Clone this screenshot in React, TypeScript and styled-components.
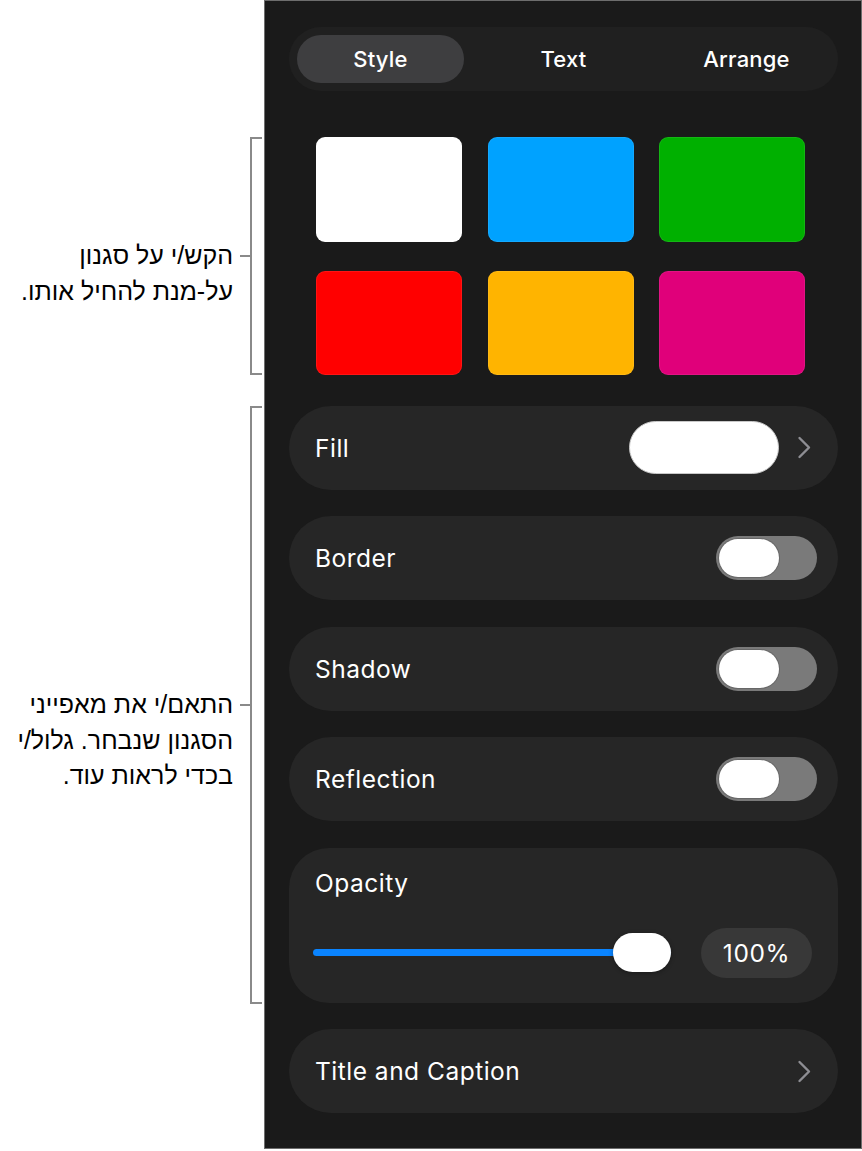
import React from "react";
import styled, { createGlobalStyle } from "styled-components";

const GlobalStyle = createGlobalStyle`
  html, body { margin: 0; padding: 0; background: #ffffff; }
  body { font-family: Inter, Roboto, "Liberation Sans", sans-serif; -webkit-font-smoothing: antialiased; }
  * { box-sizing: border-box; }
`;

const Page = styled.div`
  display: flex;
  align-items: flex-start;
  width: 862px;
  height: 1151px;
  background: #ffffff;
`;

const NotesColumn = styled.div`
  width: 264px;
  flex: none;
  padding-top: 137px;
  padding-right: 2px;
  display: flex;
  flex-direction: column;
  gap: 31px;
`;

const Annotation = styled.div<{ $h: number }>`
  height: ${(p) => p.$h}px;
  display: flex;
  align-items: center;
  justify-content: flex-end;
`;

const NoteAnchor = styled.div`
  height: 35.5px;
  margin-right: 7px;
  overflow: visible;
`;

const NoteText = styled.p`
  margin: 0;
  direction: rtl;
  text-align: right;
  white-space: nowrap;
  font-family: "Liberation Sans", "DejaVu Sans", Arial, sans-serif;
  font-size: 25px;
  line-height: 35.5px;
  color: #000000;
`;

const Tick = styled.div`
  width: 10px;
  height: 2px;
  background: #8a8a8a;
  flex: none;
`;

const Bracket = styled.div`
  align-self: stretch;
  width: 12px;
  flex: none;
  border: 2px solid #8a8a8a;
  border-right: none;
`;

const Panel = styled.div`
  width: 598px;
  height: 1149px;
  flex: none;
  border: 1px solid #6d6d6d;
  background: #1a1a1a;
  padding: 26px 23px 0 24px;
  display: flex;
  flex-direction: column;
  color: #ffffff;
`;

const TabBar = styled.div`
  height: 64px;
  border-radius: 32px;
  background: #202020;
  display: grid;
  grid-template-columns: repeat(3, 1fr);
  padding: 8px 0;
`;

const Tab = styled.div<{ $active?: boolean }>`
  margin: 0 8px;
  border-radius: 24px;
  background: ${(p) => (p.$active ? "#3e3e40" : "transparent")};
  display: flex;
  align-items: center;
  justify-content: center;
  font-size: 22px;
  font-weight: 500;
  letter-spacing: 0.2px;
  color: #ffffff;
`;

const SwatchGrid = styled.div`
  margin-top: 46px;
  padding-left: 27px;
  display: grid;
  grid-template-columns: repeat(3, 146px);
  grid-auto-rows: 104.5px;
  column-gap: 25.5px;
  row-gap: 29px;
`;

const Swatch = styled.div<{ $color: string }>`
  border-radius: 9px;
  background: ${(p) => p.$color};
  box-shadow: inset 0 0 0 1px rgba(255, 255, 255, 0.08);
`;

const RowList = styled.div`
  margin-top: 30.5px;
  display: flex;
  flex-direction: column;
  gap: 26.5px;
`;

const Row = styled.div<{ $padRight: number }>`
  height: 84px;
  border-radius: 42px;
  background: #262626;
  display: flex;
  align-items: center;
  justify-content: space-between;
  padding: 0 ${(p) => p.$padRight}px 0 26px;
`;

const Label = styled.span`
  font-size: 24.5px;
  color: #ffffff;
  letter-spacing: 0.5px;
`;

const RowEnd = styled.div`
  display: flex;
  align-items: center;
  gap: 18px;
`;

const FillWell = styled.div`
  width: 150px;
  height: 53px;
  border-radius: 27px;
  background: #ffffff;
  border: 1px solid #c8c8c8;
`;

const ToggleTrack = styled.div<{ $on?: boolean }>`
  width: 101px;
  height: 44px;
  border-radius: 22px;
  background: ${(p) => (p.$on ? "#34c759" : "#7a7a7a")};
  padding: 3px;
  display: flex;
  align-items: center;
  justify-content: ${(p) => (p.$on ? "flex-end" : "flex-start")};
`;

const ToggleKnob = styled.div`
  width: 60px;
  height: 38px;
  border-radius: 19px;
  background: #ffffff;
  box-shadow: 0 0 0 1px rgba(0, 0, 0, 0.15);
`;

const OpacityCard = styled.div`
  height: 155px;
  border-radius: 40px;
  background: #262626;
  padding: 20px 26px 25px 26px;
  display: flex;
  flex-direction: column;
  justify-content: space-between;
`;

const SliderRow = styled.div`
  height: 50px;
  display: flex;
  align-items: center;
  gap: 30px;
`;

const SliderTrack = styled.div`
  flex: 1;
  height: 39px;
  margin-left: -2px;
  position: relative;
  display: flex;
  align-items: center;
`;

const SliderFill = styled.div`
  height: 7px;
  border-radius: 4px;
  background: #0a84ff;
`;

const SliderThumb = styled.div`
  position: absolute;
  top: 0;
  width: 58px;
  height: 39px;
  border-radius: 19.5px;
  background: #ffffff;
  box-shadow: 0 1px 4px rgba(0, 0, 0, 0.35);
`;

const ValuePill = styled.div`
  width: 111px;
  height: 50px;
  border-radius: 25px;
  background: #383838;
  display: flex;
  align-items: center;
  justify-content: center;
  font-size: 24.5px;
  letter-spacing: 0.6px;
  color: #ffffff;
`;

const Chevron = () => (
  <svg width="14" height="23" viewBox="0 0 14 23" fill="none">
    <path d="M2.5 2 L12 11.5 L2.5 21" stroke="#8e8e93" strokeWidth="2.4" strokeLinecap="round" strokeLinejoin="round" />
  </svg>
);

const Toggle = ({ on }: { on?: boolean }) => (
  <ToggleTrack $on={on}>
    <ToggleKnob />
  </ToggleTrack>
);

const swatches = ["#ffffff", "#00a2ff", "#00b000", "#ff0000", "#ffb400", "#e0007a"];

export default function App() {
  const opacity = 100;
  return (
    <>
      <GlobalStyle />
      <Page>
        <NotesColumn>
          <Annotation $h={238}>
            <NoteAnchor>
              <NoteText dir="rtl">
                הקש/י על סגנון
                <br />
                על-מנת להחיל אותו.
              </NoteText>
            </NoteAnchor>
            <Tick />
            <Bracket />
          </Annotation>
          <Annotation $h={598}>
            <NoteAnchor>
              <NoteText dir="rtl">
                התאם/י את מאפייני
                <br />
                הסגנון שנבחר. גלול/י
                <br />
                בכדי לראות עוד.
              </NoteText>
            </NoteAnchor>
            <Tick />
            <Bracket />
          </Annotation>
        </NotesColumn>
        <Panel>
          <TabBar>
            <Tab $active>Style</Tab>
            <Tab>Text</Tab>
            <Tab>Arrange</Tab>
          </TabBar>
          <SwatchGrid>
            {swatches.map((c) => (
              <Swatch key={c} $color={c} />
            ))}
          </SwatchGrid>
          <RowList>
            <Row $padRight={27}>
              <Label>Fill</Label>
              <RowEnd>
                <FillWell />
                <Chevron />
              </RowEnd>
            </Row>
            <Row $padRight={21}>
              <Label>Border</Label>
              <Toggle />
            </Row>
            <Row $padRight={21}>
              <Label>Shadow</Label>
              <Toggle />
            </Row>
            <Row $padRight={21}>
              <Label>Reflection</Label>
              <Toggle />
            </Row>
            <OpacityCard>
              <Label>Opacity</Label>
              <SliderRow>
                <SliderTrack>
                  <SliderFill style={{ width: `${opacity}%` }} />
                  <SliderThumb style={{ left: `calc(${opacity}% - 58px)` }} />
                </SliderTrack>
                <ValuePill>{opacity}%</ValuePill>
              </SliderRow>
            </OpacityCard>
            <Row $padRight={27}>
              <Label>Title and Caption</Label>
              <Chevron />
            </Row>
          </RowList>
        </Panel>
      </Page>
    </>
  );
}
